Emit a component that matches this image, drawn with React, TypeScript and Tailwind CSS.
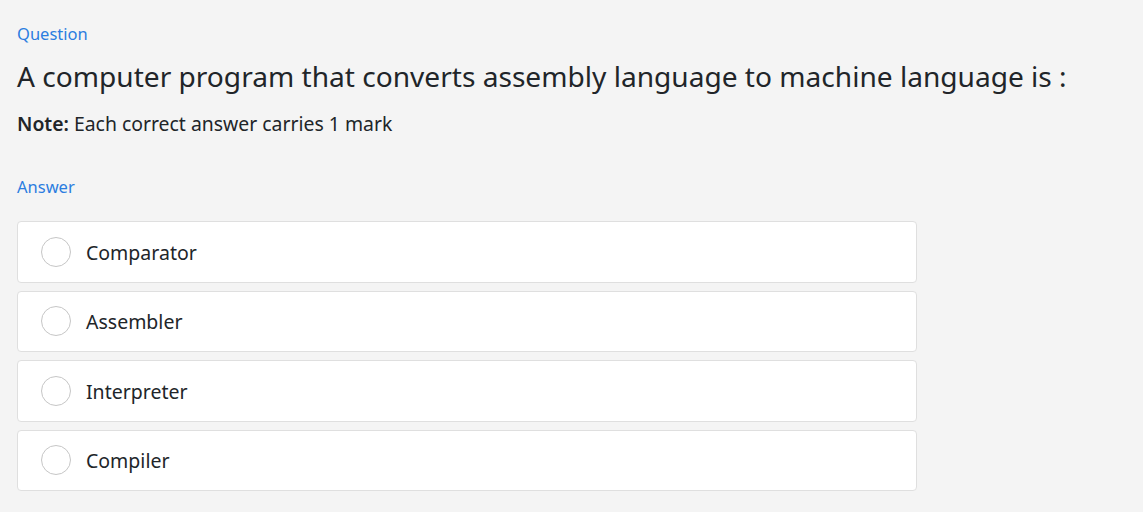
import React from "react";

const options = ["Comparator", "Assembler", "Interpreter", "Compiler"];

export default function App() {
  return (
    <div
      className="min-h-[512px] w-full bg-[#f4f4f4] px-[17px] pt-[22px] text-[#212529]"
      style={{ fontFamily: '"Noto Sans", "Open Sans", sans-serif' }}
    >
      <div className="text-[16.5px] leading-[24px] text-[#2b7de0]">Question</div>
      <h1 className="mt-[12px] whitespace-nowrap text-[28.1px] leading-[36px] font-normal text-[#212529]">
        A computer program that converts assembly language to machine language is :
      </h1>
      <p className="mt-[16px] text-[19.4px] leading-[28px]">
        <span className="font-semibold">Note:</span> Each correct answer carries 1 mark
      </p>
      <div className="mt-[37px] text-[16.5px] leading-[24px] text-[#2b7de0]">Answer</div>
      <div className="mt-[22px] flex w-[900px] flex-col gap-[8px]">
        {options.map((o) => (
          <label
            key={o}
            className="flex h-[61.5px] items-center rounded-[4px] border border-[#dfdfdf] bg-white pl-[23px]"
          >
            <span className="h-[30px] w-[30px] shrink-0 rounded-full border border-[#c6c6c6] bg-white" />
            <span className="ml-[15px] pt-[2px] text-[19.5px] leading-[30px] text-[#212529]">{o}</span>
          </label>
        ))}
      </div>
    </div>
  );
}
